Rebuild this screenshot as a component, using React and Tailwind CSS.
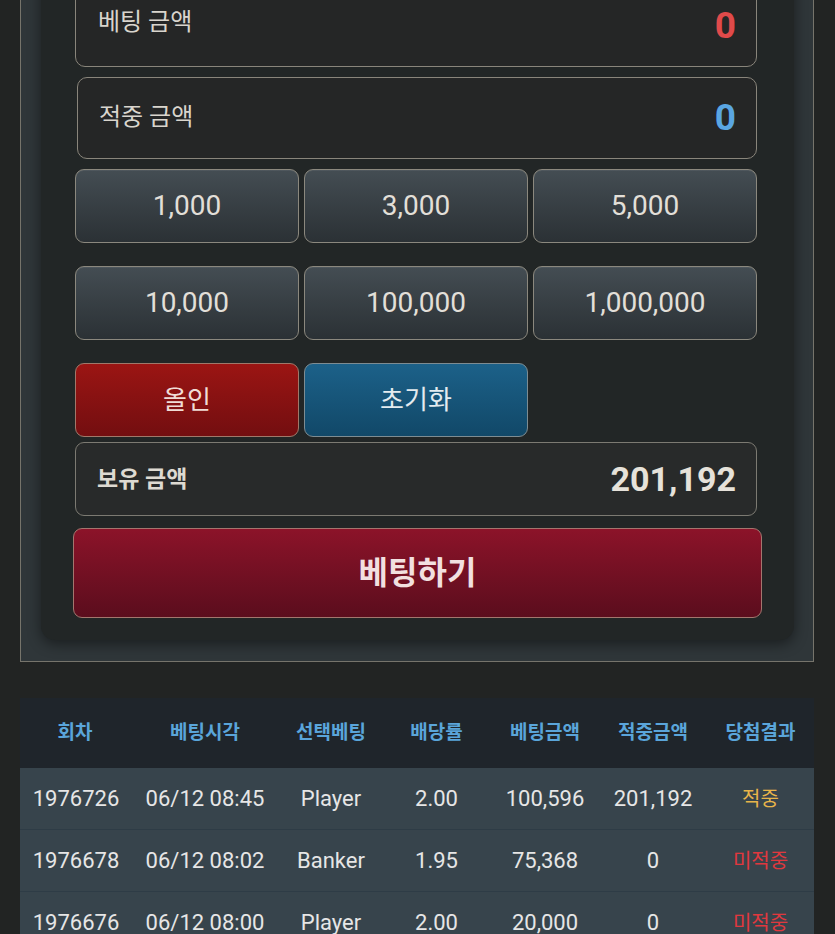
import React from "react";

const font = { fontFamily: 'Roboto, "Noto Sans CJK KR", sans-serif' };

function Chip({ label }) {
  return (
    <button className="h-[74px] rounded-[9px] border border-[#8b887e] bg-gradient-to-b from-[#444d53] to-[#2b3135] text-[28px] text-[#e2dfd8] shadow-[inset_0_1px_0_rgba(255,255,255,0.06)]">
      {label}
    </button>
  );
}

const rows = [
  ["1976726", "06/12 08:45", "Player", "2.00", "100,596", "201,192", "적중", "text-[#e8b54a]"],
  ["1976678", "06/12 08:02", "Banker", "1.95", "75,368", "0", "미적중", "text-[#e0383e]"],
  ["1976676", "06/12 08:00", "Player", "2.00", "20,000", "0", "미적중", "text-[#e0383e]"],
];

const heads = ["회차", "베팅시각", "선택베팅", "배당률", "베팅금액", "적중금액", "당첨결과"];

export default function App() {
  return (
    <div className="h-[934px] overflow-hidden bg-[#222423]" style={font}>
      <div className="-mt-[35px]">
        {/* outer panel */}
        <div className="ml-[20px] w-[794px] border-x border-b border-[#76746b] bg-[#2f3639] pl-[20px] pr-[19px] pb-[21px]">
          {/* inner panel */}
          <div className="rounded-b-[14px] bg-[#222626] pl-[34px] pr-[37px] pt-[20px] pb-[22px] shadow-[0_4px_14px_rgba(0,0,0,0.45)]">
            <div className="flex h-[82px] items-center justify-between rounded-[10px] border border-[#89857b] bg-[#252626] pl-[22px] pr-[20px]">
              <span className="-mt-[8px] text-[24px] text-[#d9d5cd]">베팅 금액</span>
              <span className="text-[37px] font-bold text-[#e04a4a]">0</span>
            </div>
            <div className="ml-[2px] mt-[10px] flex h-[82px] items-center justify-between rounded-[10px] border border-[#89857b] bg-[#252626] pl-[21px] pr-[20px]">
              <span className="-mt-[3px] text-[24px] text-[#d9d5cd]">적중 금액</span>
              <span className="text-[37px] font-bold text-[#5aa6e2]">0</span>
            </div>

            <div className="mt-[10px] grid grid-cols-3 gap-[5px]">
              <Chip label="1,000" />
              <Chip label="3,000" />
              <Chip label="5,000" />
            </div>
            <div className="mt-[23px] grid grid-cols-3 gap-[5px]">
              <Chip label="10,000" />
              <Chip label="100,000" />
              <Chip label="1,000,000" />
            </div>
            <div className="mt-[23px] grid grid-cols-3 gap-[5px]">
              <button className="h-[74px] rounded-[9px] border border-[#a0786a] bg-gradient-to-b from-[#9b1513] to-[#730e10] text-[26px] text-[#f0dcd6]">
                올인
              </button>
              <button className="h-[74px] rounded-[9px] border border-[#7d8c92] bg-gradient-to-b from-[#1c6189] to-[#114868] text-[26px] text-[#e3ebef]">
                초기화
              </button>
            </div>

            <div className="mt-[5px] flex h-[74px] items-center justify-between rounded-[9px] border border-[#7c7a72] bg-[#282a2a] pl-[21px] pr-[20px]">
              <span className="mt-[2px] text-[23px] font-bold text-[#dedad2]">보유 금액</span>
              <span className="text-[34px] font-bold text-[#e6e2da]">201,192</span>
            </div>

            <button className="-ml-[2px] mt-[12px] flex h-[90px] w-[689px] items-center justify-center rounded-[9px] border border-[#a3766e] bg-gradient-to-b from-[#8c1329] to-[#5b0d1d] text-[32px] font-bold text-[#f2e0e0]">
              베팅하기
            </button>
          </div>
        </div>

        {/* table */}
        <div className="ml-[20px] mt-[36px] w-[794px]">
          <div className="grid h-[70px] grid-cols-[110px_150px_102px_109px_108px_108px_107px] items-center bg-[#1f252b] text-center text-[19px] font-bold text-[#5aa5da]">
            {heads.map((h) => (
              <div key={h}>{h}</div>
            ))}
          </div>
          {rows.map((r) => (
            <div
              key={r[0]}
              className="grid h-[62px] grid-cols-[110px_150px_102px_109px_108px_108px_107px] items-center border-b border-[#2e3c46] bg-[#37444c] text-center text-[22px] text-[#e6e6e6]"
            >
              <div className="pl-[2px]">{r[0]}</div>
              <div>{r[1]}</div>
              <div>{r[2]}</div>
              <div>{r[3]}</div>
              <div>{r[4]}</div>
              <div>{r[5]}</div>
              <div className={`text-[20px] ${r[7]}`}>{r[6]}</div>
            </div>
          ))}
        </div>
      </div>
    </div>
  );
}
